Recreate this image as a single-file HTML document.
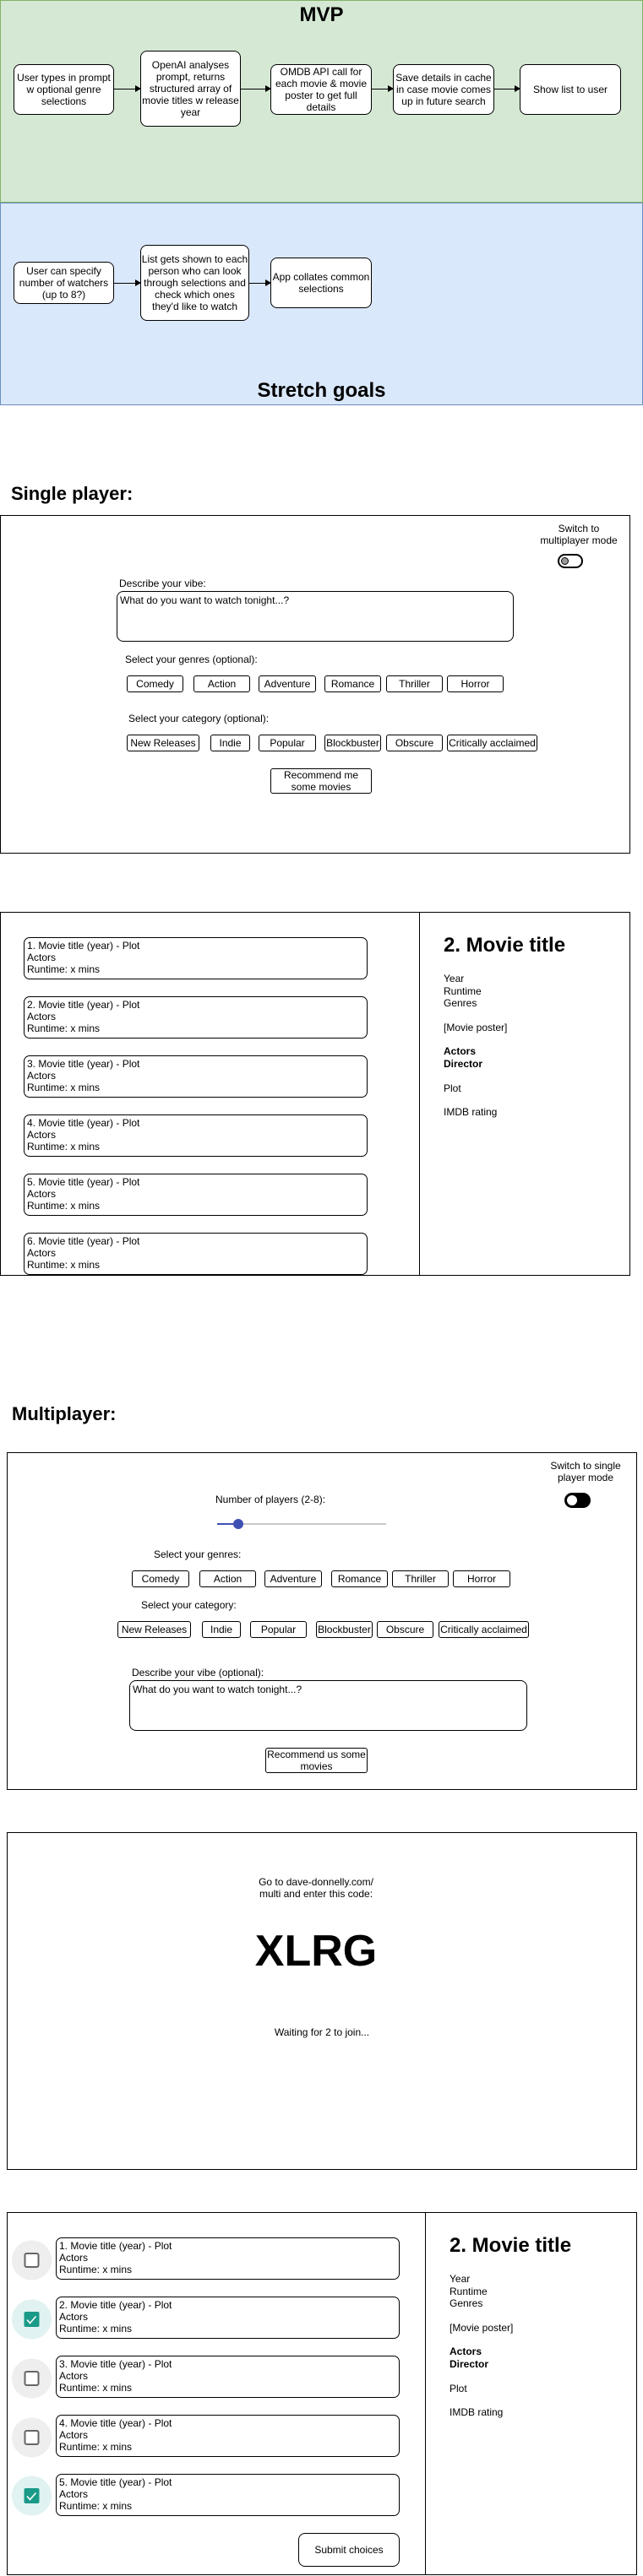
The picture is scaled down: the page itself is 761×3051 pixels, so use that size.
<!DOCTYPE html>
<html><head><meta charset="utf-8">
<style>
*{box-sizing:border-box;margin:0;padding:0}
body{width:761px;height:3051px;position:relative;background:#fff;font-family:"Liberation Sans",Arial,sans-serif;font-size:12px;color:#000;overflow:hidden}
.a{position:absolute}
.b{position:absolute;border:1px solid #000;border-radius:8px;background:#fff;display:flex;align-items:center;justify-content:center;text-align:center;line-height:14px;font-size:12px}
.g{border-radius:3px}
.t{position:absolute;line-height:14px;white-space:nowrap}
.h{position:absolute;font-weight:bold;font-size:24px;line-height:28px;white-space:nowrap}
.h2{font-size:22px}
.ar{position:absolute;height:1px;background:#000}
.ar:after{content:"";position:absolute;right:-1px;top:-4px;border-left:7px solid #000;border-top:4.5px solid transparent;border-bottom:4.5px solid transparent}
.frame{position:absolute;border:1px solid #000;background:#fff}
.li{position:absolute;border:1px solid #000;border-radius:7px;background:#fff;padding:2px 3px;line-height:14px;font-size:12px}
.ta{position:absolute;border:1px solid #000;border-radius:8px;background:#fff;padding:3px 3px;line-height:14px}
</style></head><body>

<div class="a" style="left:0;top:0;width:761px;height:240px;background:#d5e8d4;border:1px solid #82b366"></div>
<div class="h" style="left:0;width:761px;text-align:center;top:4px">MVP</div>
<div class="b" style="left:16px;top:76px;width:119px;height:60px">User types in prompt w optional genre selections</div>
<div class="b" style="left:166px;top:60px;width:119px;height:90px">OpenAI analyses prompt, returns structured array of movie titles w release year</div>
<div class="b" style="left:320px;top:76px;width:120px;height:60px">OMDB API call for each movie &amp; movie poster to get full details</div>
<div class="b" style="left:465px;top:76px;width:120px;height:60px">Save details in cache in case movie comes up in future search</div>
<div class="b" style="left:615px;top:76px;width:120px;height:60px">Show list to user</div>
<div class="ar" style="left:135px;top:105px;width:31px"></div>
<div class="ar" style="left:285px;top:105px;width:35px"></div>
<div class="ar" style="left:440px;top:105px;width:25px"></div>
<div class="ar" style="left:585px;top:105px;width:30px"></div>

<div class="a" style="left:0;top:240px;width:761px;height:240px;background:#dae8fc;border:1px solid #6c8ebf"></div>
<div class="b" style="left:16px;top:310px;width:119px;height:50px">User can specify number of watchers (up to 8?)</div>
<div class="b" style="left:166px;top:290px;width:129px;height:90px">List gets shown to each person who can look through selections and check which ones they'd like to watch</div>
<div class="b" style="left:320px;top:305px;width:120px;height:60px">App collates common selections</div>
<div class="ar" style="left:135px;top:335px;width:31px"></div>
<div class="ar" style="left:295px;top:335px;width:25px"></div>
<div class="h" style="left:0;width:761px;text-align:center;top:449px">Stretch goals</div>

<div class="h h2" style="left:13px;top:571px">Single player:</div>
<div class="frame" style="left:0;top:610px;width:746px;height:401px"></div>
<div class="t" style="left:625px;width:120px;text-align:center;top:619px">Switch to<br>multiplayer mode</div>
<div class="a" style="left:660px;top:656px;width:30px;height:17px;border:2px solid #000;border-radius:9px;background:#fff"></div>
<div class="a" style="left:664px;top:660px;width:9px;height:9px;border:1.5px solid #000;border-radius:50%;background:#999"></div>
<div class="t" style="left:141px;top:684px">Describe your vibe:</div>
<div class="ta" style="left:138px;top:700px;width:470px;height:60px">What do you want to watch tonight...?</div>
<div class="t" style="left:148px;top:774px">Select your genres (optional):</div>
<div class="b g" style="left:150px;top:800px;width:67px;height:20px">Comedy</div>
<div class="b g" style="left:229px;top:800px;width:67px;height:20px">Action</div>
<div class="b g" style="left:306px;top:800px;width:68px;height:20px">Adventure</div>
<div class="b g" style="left:384px;top:800px;width:67px;height:20px">Romance</div>
<div class="b g" style="left:457px;top:800px;width:67px;height:20px">Thriller</div>
<div class="b g" style="left:529px;top:800px;width:67px;height:20px">Horror</div>
<div class="t" style="left:152px;top:844px">Select your category (optional):</div>
<div class="b g" style="left:150px;top:870px;width:86px;height:20px">New Releases</div>
<div class="b g" style="left:249px;top:870px;width:47px;height:20px">Indie</div>
<div class="b g" style="left:306px;top:870px;width:68px;height:20px">Popular</div>
<div class="b g" style="left:384px;top:870px;width:67px;height:20px">Blockbuster</div>
<div class="b g" style="left:457px;top:870px;width:67px;height:20px">Obscure</div>
<div class="b g" style="left:529px;top:870px;width:107px;height:20px;white-space:nowrap">Critically acclaimed</div>
<div class="b g" style="left:320px;top:910px;width:120px;height:30px">Recommend me<br>some movies</div>

<div class="frame" style="left:0;top:1080px;width:746px;height:431px;overflow:hidden">
  <div class="li" style="left:27px;top:29px;width:407px;height:50px">1. Movie title (year) - Plot<br>Actors<br>Runtime: x mins</div>
  <div class="li" style="left:27px;top:99px;width:407px;height:50px">2. Movie title (year) - Plot<br>Actors<br>Runtime: x mins</div>
  <div class="li" style="left:27px;top:169px;width:407px;height:50px">3. Movie title (year) - Plot<br>Actors<br>Runtime: x mins</div>
  <div class="li" style="left:27px;top:239px;width:407px;height:50px">4. Movie title (year) - Plot<br>Actors<br>Runtime: x mins</div>
  <div class="li" style="left:27px;top:309px;width:407px;height:50px">5. Movie title (year) - Plot<br>Actors<br>Runtime: x mins</div>
  <div class="li" style="left:27px;top:379px;width:407px;height:50px">6. Movie title (year) - Plot<br>Actors<br>Runtime: x mins</div>
  <div class="a" style="left:495px;top:0;width:1px;height:431px;background:#000"></div>
</div>
<div class="h" style="left:525px;top:1106px">2. Movie title</div>
<div class="t" style="left:525px;top:1152px;line-height:14.5px">Year<br>Runtime<br>Genres</div>
<div class="t" style="left:525px;top:1210px">[Movie poster]</div>
<div class="t" style="left:525px;top:1238px;font-weight:bold;line-height:15px">Actors<br>Director</div>
<div class="t" style="left:525px;top:1282px">Plot</div>
<div class="t" style="left:525px;top:1310px">IMDB rating</div>

<div class="h h2" style="left:14px;top:1661px">Multiplayer:</div>
<div class="frame" style="left:8px;top:1720px;width:746px;height:400px"></div>
<div class="t" style="left:633px;width:120px;text-align:center;top:1729px">Switch to single<br>player mode</div>
<div class="a" style="left:668px;top:1768px;width:31px;height:18px;border-radius:9px;background:#000"></div>
<div class="a" style="left:671px;top:1771px;width:12px;height:12px;border-radius:50%;background:#fff"></div>
<div class="t" style="left:255px;top:1769px">Number of players (2-8):</div>
<div class="a" style="left:257px;top:1804px;width:200px;height:2px;background:#c8c8c8"></div>
<div class="a" style="left:257px;top:1804px;width:25px;height:2px;background:#3f51b5"></div>
<div class="a" style="left:276px;top:1799px;width:12px;height:12px;border-radius:50%;background:#3f51b5"></div>
<div class="t" style="left:182px;top:1834px">Select your genres:</div>
<div class="b g" style="left:156px;top:1860px;width:68px;height:20px">Comedy</div>
<div class="b g" style="left:236px;top:1860px;width:67px;height:20px">Action</div>
<div class="b g" style="left:313px;top:1860px;width:68px;height:20px">Adventure</div>
<div class="b g" style="left:392px;top:1860px;width:67px;height:20px">Romance</div>
<div class="b g" style="left:464px;top:1860px;width:67px;height:20px">Thriller</div>
<div class="b g" style="left:536px;top:1860px;width:68px;height:20px">Horror</div>
<div class="t" style="left:167px;top:1894px">Select your category:</div>
<div class="b g" style="left:139px;top:1920px;width:87px;height:20px">New Releases</div>
<div class="b g" style="left:239px;top:1920px;width:46px;height:20px">Indie</div>
<div class="b g" style="left:296px;top:1920px;width:67px;height:20px">Popular</div>
<div class="b g" style="left:374px;top:1920px;width:67px;height:20px">Blockbuster</div>
<div class="b g" style="left:446px;top:1920px;width:67px;height:20px">Obscure</div>
<div class="b g" style="left:519px;top:1920px;width:107px;height:20px;white-space:nowrap">Critically acclaimed</div>
<div class="t" style="left:156px;top:1974px">Describe your vibe (optional):</div>
<div class="ta" style="left:153px;top:1990px;width:471px;height:60px">What do you want to watch tonight...?</div>
<div class="b g" style="left:314px;top:2070px;width:121px;height:30px">Recommend us some<br>movies</div>

<div class="frame" style="left:8px;top:2170px;width:746px;height:400px"></div>
<div class="t" style="left:274px;width:200px;text-align:center;top:2222px">Go to dave-donnelly.com/<br>multi and enter this code:</div>
<div class="a" style="left:274px;width:200px;text-align:center;top:2280px;font-weight:bold;font-size:52px;line-height:62px">XLRG</div>
<div class="t" style="left:281px;width:200px;text-align:center;top:2400px">Waiting for 2 to join...</div>

<div class="frame" style="left:8px;top:2620px;width:746px;height:430px"></div>
<div class="a" style="left:503px;top:2620px;width:1px;height:430px;background:#000"></div>
<div class="li" style="left:66px;top:2650px;width:407px;height:50px">1. Movie title (year) - Plot<br>Actors<br>Runtime: x mins</div>
<div class="li" style="left:66px;top:2720px;width:407px;height:50px">2. Movie title (year) - Plot<br>Actors<br>Runtime: x mins</div>
<div class="li" style="left:66px;top:2790px;width:407px;height:50px">3. Movie title (year) - Plot<br>Actors<br>Runtime: x mins</div>
<div class="li" style="left:66px;top:2860px;width:407px;height:50px">4. Movie title (year) - Plot<br>Actors<br>Runtime: x mins</div>
<div class="li" style="left:66px;top:2930px;width:407px;height:50px">5. Movie title (year) - Plot<br>Actors<br>Runtime: x mins</div>
<svg class="a" style="left:0;top:2620px" width="70" height="380">
  <g>
    <circle cx="37.5" cy="57" r="23.5" fill="#eeeeee"/><rect x="29.5" y="49" width="16" height="16" rx="2" fill="#fff" stroke="#666" stroke-width="2"/>
    <circle cx="37.5" cy="127" r="23.5" fill="#e0f2f1"/><rect x="28.5" y="118" width="18" height="18" rx="2" fill="#1a9a88"/><path d="M32 127.5l3.5 4 7-8" fill="none" stroke="#fff" stroke-width="1.6"/>
    <circle cx="37.5" cy="197" r="23.5" fill="#eeeeee"/><rect x="29.5" y="189" width="16" height="16" rx="2" fill="#fff" stroke="#666" stroke-width="2"/>
    <circle cx="37.5" cy="267" r="23.5" fill="#eeeeee"/><rect x="29.5" y="259" width="16" height="16" rx="2" fill="#fff" stroke="#666" stroke-width="2"/>
    <circle cx="37.5" cy="336" r="23.5" fill="#e0f2f1"/><rect x="28.5" y="327" width="18" height="18" rx="2" fill="#1a9a88"/><path d="M32 336.5l3.5 4 7-8" fill="none" stroke="#fff" stroke-width="1.6"/>
  </g>
</svg>
<div class="b" style="left:353px;top:3000px;width:120px;height:40px">Submit choices</div>
<div class="h" style="left:532px;top:2646px">2. Movie title</div>
<div class="t" style="left:532px;top:2692px;line-height:14.5px">Year<br>Runtime<br>Genres</div>
<div class="t" style="left:532px;top:2750px">[Movie poster]</div>
<div class="t" style="left:532px;top:2778px;font-weight:bold;line-height:15px">Actors<br>Director</div>
<div class="t" style="left:532px;top:2822px">Plot</div>
<div class="t" style="left:532px;top:2850px">IMDB rating</div>
</body></html>
